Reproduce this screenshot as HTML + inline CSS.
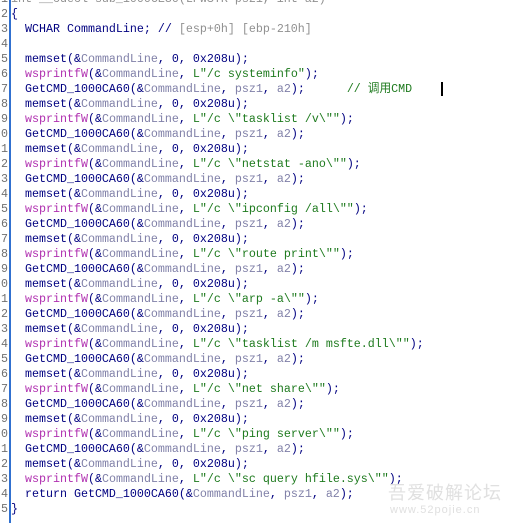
<!DOCTYPE html><html><head><meta charset="utf-8"><style>
body{margin:0;width:507px;height:523px;background:#fff;overflow:hidden;position:relative;font-family:"Liberation Mono","Noto Sans CJK SC",monospace;font-size:11.67px}
#ln{position:absolute;left:1px;top:-8px;color:#707070}
#bar{position:absolute;left:9px;top:0;width:1.5px;height:523px;background:#3070d0}
#code{position:absolute;left:11px;top:-8px;color:#000080;white-space:pre}
#ln div,#code div{height:15px;line-height:15px}
.v{color:#8080a8}.f{color:#b030b0}.s{color:#1e7a1e}.c{color:#1e7a1e;font-family:"Liberation Mono","Noto Sans CJK SC",monospace}.g{color:#909090}
#cur{position:absolute;left:441px;top:82px;width:2px;height:14px;background:#000}
#wm{position:absolute;left:388px;top:482px;color:#e0e0e0;font-size:18px;line-height:20px;font-family:"Noto Sans CJK SC",sans-serif;white-space:nowrap;letter-spacing:1px}
#wm2{position:absolute;left:390px;top:504px;color:#e0e0e0;font-size:11px;font-family:"Liberation Sans",sans-serif;white-space:nowrap;letter-spacing:1px}
</style></head><body>
<div id="ln"><div>1</div><div>2</div><div>3</div><div>4</div><div>5</div><div>6</div><div>7</div><div>8</div><div>9</div><div>0</div><div>1</div><div>2</div><div>3</div><div>4</div><div>5</div><div>6</div><div>7</div><div>8</div><div>9</div><div>0</div><div>1</div><div>2</div><div>3</div><div>4</div><div>5</div><div>6</div><div>7</div><div>8</div><div>9</div><div>0</div><div>1</div><div>2</div><div>3</div><div>4</div><div>5</div></div>
<div id="bar"></div>
<div id="code"><div class="g">int __cdecl sub_1000CE30(LPWSTR psz1, int a2)</div><div>{</div><div>  WCHAR CommandLine; // <span class="g">[esp+0h] [ebp-210h]</span></div><div> </div><div>  memset(&amp;<span class="v">CommandLine</span>, 0, 0x208u);</div><div>  <span class="f">wsprintfW</span>(&amp;<span class="v">CommandLine</span>, <span class="s">L"/c systeminfo"</span>);</div><div>  GetCMD_1000CA60(&amp;<span class="v">CommandLine</span>, <span class="v">psz1</span>, <span class="v">a2</span>);      <span class="c">// 调用CMD</span></div><div>  memset(&amp;<span class="v">CommandLine</span>, 0, 0x208u);</div><div>  <span class="f">wsprintfW</span>(&amp;<span class="v">CommandLine</span>, <span class="s">L"/c \"tasklist /v\""</span>);</div><div>  GetCMD_1000CA60(&amp;<span class="v">CommandLine</span>, <span class="v">psz1</span>, <span class="v">a2</span>);</div><div>  memset(&amp;<span class="v">CommandLine</span>, 0, 0x208u);</div><div>  <span class="f">wsprintfW</span>(&amp;<span class="v">CommandLine</span>, <span class="s">L"/c \"netstat -ano\""</span>);</div><div>  GetCMD_1000CA60(&amp;<span class="v">CommandLine</span>, <span class="v">psz1</span>, <span class="v">a2</span>);</div><div>  memset(&amp;<span class="v">CommandLine</span>, 0, 0x208u);</div><div>  <span class="f">wsprintfW</span>(&amp;<span class="v">CommandLine</span>, <span class="s">L"/c \"ipconfig /all\""</span>);</div><div>  GetCMD_1000CA60(&amp;<span class="v">CommandLine</span>, <span class="v">psz1</span>, <span class="v">a2</span>);</div><div>  memset(&amp;<span class="v">CommandLine</span>, 0, 0x208u);</div><div>  <span class="f">wsprintfW</span>(&amp;<span class="v">CommandLine</span>, <span class="s">L"/c \"route print\""</span>);</div><div>  GetCMD_1000CA60(&amp;<span class="v">CommandLine</span>, <span class="v">psz1</span>, <span class="v">a2</span>);</div><div>  memset(&amp;<span class="v">CommandLine</span>, 0, 0x208u);</div><div>  <span class="f">wsprintfW</span>(&amp;<span class="v">CommandLine</span>, <span class="s">L"/c \"arp -a\""</span>);</div><div>  GetCMD_1000CA60(&amp;<span class="v">CommandLine</span>, <span class="v">psz1</span>, <span class="v">a2</span>);</div><div>  memset(&amp;<span class="v">CommandLine</span>, 0, 0x208u);</div><div>  <span class="f">wsprintfW</span>(&amp;<span class="v">CommandLine</span>, <span class="s">L"/c \"tasklist /m msfte.dll\""</span>);</div><div>  GetCMD_1000CA60(&amp;<span class="v">CommandLine</span>, <span class="v">psz1</span>, <span class="v">a2</span>);</div><div>  memset(&amp;<span class="v">CommandLine</span>, 0, 0x208u);</div><div>  <span class="f">wsprintfW</span>(&amp;<span class="v">CommandLine</span>, <span class="s">L"/c \"net share\""</span>);</div><div>  GetCMD_1000CA60(&amp;<span class="v">CommandLine</span>, <span class="v">psz1</span>, <span class="v">a2</span>);</div><div>  memset(&amp;<span class="v">CommandLine</span>, 0, 0x208u);</div><div>  <span class="f">wsprintfW</span>(&amp;<span class="v">CommandLine</span>, <span class="s">L"/c \"ping server\""</span>);</div><div>  GetCMD_1000CA60(&amp;<span class="v">CommandLine</span>, <span class="v">psz1</span>, <span class="v">a2</span>);</div><div>  memset(&amp;<span class="v">CommandLine</span>, 0, 0x208u);</div><div>  <span class="f">wsprintfW</span>(&amp;<span class="v">CommandLine</span>, <span class="s">L"/c \"sc query hfile.sys\""</span>);</div><div>  return GetCMD_1000CA60(&amp;<span class="v">CommandLine</span>, <span class="v">psz1</span>, <span class="v">a2</span>);</div><div>}</div></div>
<div id="cur"></div>
<div id="wm">吾爱破解论坛</div>
<div id="wm2">www.52pojie.cn</div>
</body></html>
